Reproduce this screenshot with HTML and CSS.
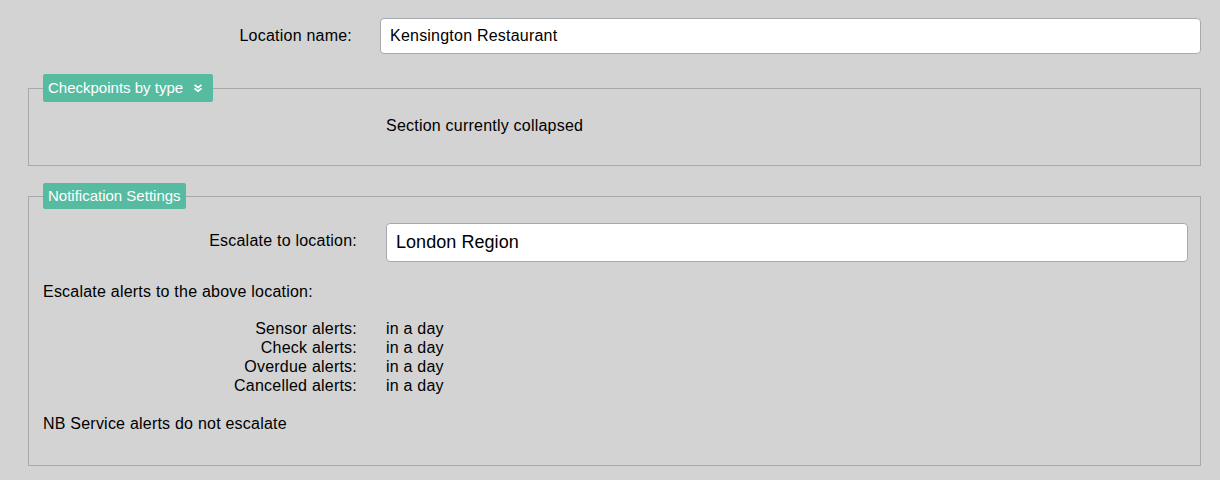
FILE: index.html
```html
<!DOCTYPE html>
<html lang="en">
<head>
<meta charset="utf-8">
<title>Location settings</title>
<link rel="stylesheet" href="styles.css">
</head>
<body>
<div class="page">
  <div class="top-row">
    <label class="lbl" for="locname">Location name:</label>
    <input id="locname" class="field" type="text" value="Kensington Restaurant">
  </div>

  <fieldset class="panel panel--first">
    <legend class="panel-title panel-title--toggle">Checkpoints by type<svg class="chev" viewBox="0 0 10 8" width="10" height="8" aria-hidden="true"><path d="M1.5 0.8 L5 3.6 L8.5 0.8 M1.5 4.4 L5 7.2 L8.5 4.4" fill="none" stroke="#fff" stroke-width="1.7"/></svg></legend>
    <div class="grid grid--collapsed">
      <div></div>
      <div class="val">Section currently collapsed</div>
    </div>
  </fieldset>

  <fieldset class="panel panel--second">
    <legend class="panel-title">Notification Settings</legend>
    <div class="grid grid--field">
      <label class="lbl" for="escloc">Escalate to location:</label>
      <input id="escloc" class="field field--lg" type="text" value="London Region">
    </div>
    <p class="note note--first">Escalate alerts to the above location:</p>
    <div class="grid grid--alerts">
      <div class="alert-lbl">Sensor alerts:</div><div class="val">in a day</div>
      <div class="alert-lbl">Check alerts:</div><div class="val">in a day</div>
      <div class="alert-lbl">Overdue alerts:</div><div class="val">in a day</div>
      <div class="alert-lbl">Cancelled alerts:</div><div class="val">in a day</div>
    </div>
    <p class="note note--last">NB Service alerts do not escalate</p>
  </fieldset>
</div>
</body>
</html>
```

FILE: styles.css
```css
html, body {
  margin: 0;
  padding: 0;
}

body {
  background: #d3d3d3;
  color: #000;
  font-family: "Liberation Sans", Arial, sans-serif;
  font-size: 16px;
  line-height: 19px;
  letter-spacing: 0.22px;
}

.page {
  padding: 18px 19px 0 28px;
}

.top-row {
  display: grid;
  grid-template-columns: 324px 1fr;
  column-gap: 28px;
  align-items: start;
}

.lbl {
  text-align: right;
  padding-top: 8px;
}

.field {
  display: block;
  width: 100%;
  box-sizing: border-box;
  height: 36px;
  margin: 0;
  padding: 0 9px;
  border: 1px solid #a6aaad;
  border-radius: 4px;
  background: #fff;
  color: #000;
  font-family: "Liberation Sans", Arial, sans-serif;
  font-size: 16px;
  letter-spacing: 0.22px;
  outline: none;
}

.field--lg {
  height: 39px;
  font-size: 18px;
  letter-spacing: 0.05px;
}

.panel {
  margin: 0;
  padding: 0 12px 31px 14px;
  border: 1px solid #a9a9a9;
  min-width: 0;
}

.panel--first {
  margin-top: 20px;
  padding-bottom: 30px;
}

.panel--second {
  margin-top: 17px;
  padding-bottom: 32px;
}

.panel-title {
  padding: 0 5px;
  background: #56bba0;
  color: #fff;
  font-size: 15px;
  line-height: 26px;
  letter-spacing: 0;
  border-radius: 2px;
}

.panel-title--toggle {
  line-height: 28px;
}

.chev {
  display: inline-block;
  vertical-align: middle;
  margin: -3px 5px 0 10px;
}

.grid {
  display: grid;
  grid-template-columns: 314px 1fr;
  column-gap: 29px;
}

.grid--collapsed {
  padding-top: 14px;
}

.grid--field {
  margin-top: 14px;
  align-items: start;
}

.grid--alerts {
  margin-top: 18px;
}

.alert-lbl {
  text-align: right;
}

.note {
  margin: 0;
}

.note--first {
  margin-top: 20px;
}

.note--last {
  margin-top: 19px;
}
```
